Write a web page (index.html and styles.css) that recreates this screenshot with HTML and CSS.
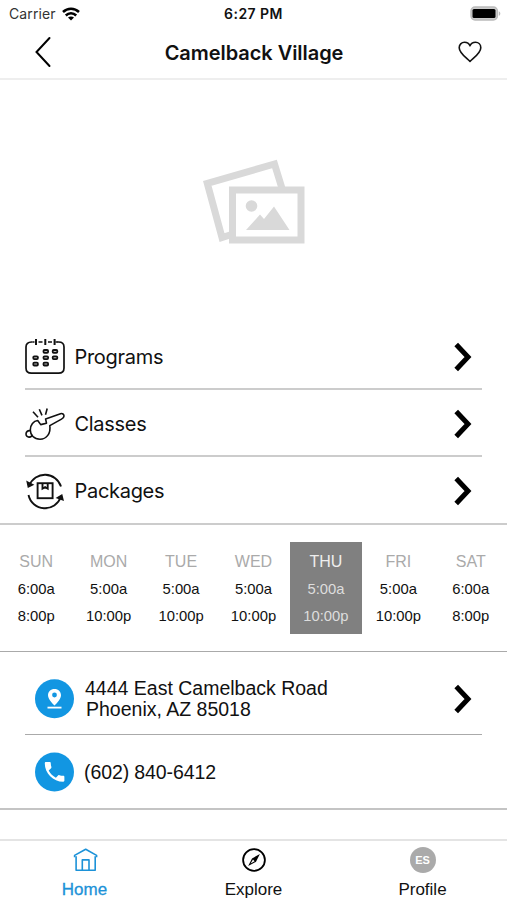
FILE: index.html
```
<!DOCTYPE html>
<html lang="en">
<head>
    <meta charset="UTF-8">
    <meta name="viewport" content="width=device-width, initial-scale=1.0">
    <title>Camelback Village</title>
    <link rel="stylesheet" href="styles.css">
</head>
<body>
    <div class="app">
        <!-- Status Bar -->
        <div class="status-bar">
            <div class="carrier">
                <span>Carrier</span>
                <svg class="wifi" width="18" height="14" viewBox="0 0 18 14" fill="none" stroke="#000" stroke-width="2.5">
                    <path d="M1 5C5.500.6 12.500.6 17 5"/>
                    <path d="M3.800 8.500C6.700 5.600 11.300 5.600 14.200 8.500"/>
                    <path d="M9 13.600L6 10.600C7.800 9 10.200 9 12 10.600Z" fill="#000" stroke="none"/>
                </svg>
            </div>
            <span class="time">6:27 PM</span>
            <svg class="battery" width="31" height="15" viewBox="0 0 31 15">
                <rect x="1" y="1" width="26.400" height="13" rx="4" fill="#ccc" stroke="#bbb" stroke-width="1.400"/>
                <rect x="2.500" y="3" width="23" height="9" rx="1.500" fill="#000"/>
                <path d="M28.800 5.200C30.800 6 30.800 9 28.800 9.800Z" fill="#bbb"/>
            </svg>
        </div>

        <!-- Header -->
        <header class="header">
            <svg class="back" width="18" height="32" viewBox="0 0 18 32" fill="none" stroke="#000" stroke-width="2" stroke-linecap="round">
                <path d="M15.500 2L2.500 16L15.500 30"/>
            </svg>
            <h1>Camelback Village</h1>
            <svg class="heart" width="24" height="22" viewBox="0 0 24 22" fill="none" stroke="#111" stroke-width="1.600" stroke-linejoin="round">
                <path d="M12 20.500C8 16.500 1.200 12 1.200 6.700C1.200 3.600 3.500 1.300 6.500 1.300C9 1.300 11.100 2.600 12 4.800C12.900 2.600 15 1.300 17.500 1.300C20.500 1.300 22.800 3.600 22.800 6.700C22.800 12 16 16.500 12 20.500Z"/>
            </svg>
        </header>

        <!-- Photo Placeholder -->
        <div class="hero">
            <svg width="102" height="86" viewBox="0 0 102 86" fill="none" stroke="#d9d9d9">
                <path d="M27 76L19 78.500L4.300 24.300L71.500 5L79.500 31" stroke-width="7"/>
                <rect x="29.500" y="31" width="68.500" height="50" fill="#fff" stroke-width="7"/>
                <circle cx="48.500" cy="47" r="5.800" fill="#d9d9d9" stroke="none"/>
                <path d="M43 71L57 55.500L61 60L71 47.500L86.500 71Z" fill="#d9d9d9" stroke="none"/>
            </svg>
        </div>

        <!-- Menu -->
        <nav class="menu">
            <div class="menu-item">
                <svg class="menu-icon" width="40" height="38" viewBox="0 0 40 38" fill="none" stroke="#111" stroke-width="1.700">
                    <path d="M7.500 4H6.500C3 4 1 6 1 9V30C1 33 3 35.200 6.500 35.200H33.500C37 35.200 39 33 39 30V9C39 6 37 4 33.500 4H32.500"/>
                    <path d="M13.500 4H17.500M23 4H27M7.500 4H9.500M30.500 4H33" stroke-width="1.600"/>
                    <path d="M11 1V7M20.300 1V7M29.600 1V7" stroke-width="2"/>
                    <g stroke-width="1.800" fill="#bbb">
                        <rect x="18.500" y="12" width="4.600" height="2.800" rx="1"/>
                        <rect x="27.700" y="12" width="4.600" height="2.800" rx="1"/>
                        <rect x="8.300" y="18.300" width="4.600" height="2.800" rx="1"/>
                        <rect x="18.500" y="18.300" width="4.600" height="2.800" rx="1"/>
                        <rect x="27.700" y="18.300" width="4.600" height="2.800" rx="1"/>
                        <rect x="8.300" y="24.700" width="4.600" height="2.800" rx="1"/>
                        <rect x="18.500" y="24.700" width="4.600" height="2.800" rx="1"/>
                    </g>
                </svg>
                <span class="menu-label">Programs</span>
                <svg class="chevron" width="18" height="30" viewBox="0 0 18 30" fill="none" stroke="#000" stroke-width="5">
                    <path d="M2.200 2.500L14 15L2.200 27.500"/>
                </svg>
            </div>
            <div class="menu-item">
                <svg class="menu-icon" width="40" height="38" viewBox="0 0 40 38" fill="none" stroke="#111" stroke-width="1.600" stroke-linejoin="round">
                    <path d="M12.700 15.500L15.700 19.600L21.500 18.200L20.600 14L35.500 8.700C37.500 8.100 39 9.300 39 11C39 12.600 38 13.300 36.500 14.100L24.800 20.600C26 28.500 21.500 34.200 15 34.200C9 34.200 5.300 30 5.300 25C5.300 20 8.500 16 12.700 15.500Z"/>
                    <path d="M5.500 25.800C3 25.100 1 26.600 1 29C1 31.300 2.700 32.300 4.300 32.100C6 31.900 7 31 7.200 29.800"/>
                    <path d="M8 6.800L13 12.300M14.300 4.200L17 10.400M22.200 3.500L20.500 9.800"/>
                </svg>
                <span class="menu-label">Classes</span>
                <svg class="chevron" width="18" height="30" viewBox="0 0 18 30" fill="none" stroke="#000" stroke-width="5">
                    <path d="M2.200 2.500L14 15L2.200 27.500"/>
                </svg>
            </div>
            <div class="menu-item">
                <svg class="menu-icon" width="40" height="38" viewBox="0 0 40 38" fill="none" stroke="#111" stroke-width="1.900">
                    <path d="M4.300 13.500A16.800 16.800 0 0 1 36 14.500"/>
                    <path d="M3.500 23A16.800 16.800 0 0 0 35.800 25"/>
                    <path d="M2.200 9.800L7.800 12.800L3.300 15Z" fill="#111" stroke-width="1.400"/>
                    <path d="M32.200 25.800L36.800 23L38 27.800Z" fill="#111" stroke-width="1.400"/>
                    <rect x="12.600" y="11.200" width="15" height="15"/>
                    <path d="M17.500 11.200V16.700L20.100 15.200L22.700 16.700V11.200"/>
                </svg>
                <span class="menu-label">Packages</span>
                <svg class="chevron" width="18" height="30" viewBox="0 0 18 30" fill="none" stroke="#000" stroke-width="5">
                    <path d="M2.200 2.500L14 15L2.200 27.500"/>
                </svg>
            </div>
        </nav>

        <!-- Opening Hours -->
        <div class="hours">
            <div class="day"><b>SUN</b><span>6:00a</span><span>8:00p</span></div>
            <div class="day"><b>MON</b><span>5:00a</span><span>10:00p</span></div>
            <div class="day"><b>TUE</b><span>5:00a</span><span>10:00p</span></div>
            <div class="day"><b>WED</b><span>5:00a</span><span>10:00p</span></div>
            <div class="day today"><b>THU</b><span>5:00a</span><span>10:00p</span></div>
            <div class="day"><b>FRI</b><span>5:00a</span><span>10:00p</span></div>
            <div class="day"><b>SAT</b><span>6:00a</span><span>8:00p</span></div>
        </div>

        <!-- Contact -->
        <div class="contact">
            <div class="contact-item address">
                <svg class="contact-icon" width="40" height="40" viewBox="0 0 40 40">
                    <circle cx="20.500" cy="19.800" r="19.500" fill="#1296e2"/>
                    <path d="M20.500 10C16.700 10 14 12.700 14 16.200C14 20.500 20.500 26.500 20.500 26.500C20.500 26.500 27 20.500 27 16.200C27 12.700 24.300 10 20.500 10ZM20.500 13.600A2.400 2.400 0 1 1 20.500 18.400A2.400 2.400 0 1 1 20.500 13.600Z" fill="#fff" fill-rule="evenodd"/>
                    <path d="M13.500 28.600H27.500" stroke="#fff" stroke-width="1.800"/>
                </svg>
                <div class="contact-text">
                    <div>4444 East Camelback Road</div>
                    <div class="city">Phoenix, AZ 85018</div>
                </div>
                <svg class="chevron" width="18" height="30" viewBox="0 0 18 30" fill="none" stroke="#000" stroke-width="5">
                    <path d="M2.200 2.500L14 15L2.200 27.500"/>
                </svg>
            </div>
            <div class="contact-item phone">
                <svg class="contact-icon" width="40" height="40" viewBox="0 0 40 40">
                    <circle cx="20.500" cy="20" r="19.500" fill="#1296e2"/>
                    <path transform="translate(7.500 6.800) scale(1.090)" d="M6.600 10.800C8.100 13.600 10.400 15.900 13.200 17.400L15.400 15.200C15.700 14.900 16.100 14.800 16.400 15C17.500 15.400 18.800 15.600 20 15.600C20.600 15.600 21 16 21 16.600V20C21 20.600 20.600 21 20 21C10.600 21 3 13.400 3 4C3 3.400 3.500 3 4 3H7.500C8.100 3 8.500 3.400 8.500 4C8.500 5.300 8.700 6.500 9.100 7.600C9.200 7.900 9.100 8.300 8.800 8.600Z" fill="#fff"/>
                </svg>
                <div class="contact-text">(602) 840-6412</div>
            </div>
        </div>

        <!-- Tab Bar -->
        <footer class="tab-bar">
            <div class="tab active">
                <svg width="26" height="26" viewBox="0 0 26 26" fill="none" stroke="#1c92d8" stroke-width="1.600" stroke-linejoin="round">
                    <path d="M4.100 9.300V23.200H23.200V9.300"/>
                    <path d="M2.600 10.300V8.400L13.700 2.200L24.600 8.400V10.300"/>
                    <path d="M10.300 23V12.900H17V23"/>
                </svg>
                <span>Home</span>
            </div>
            <div class="tab">
                <svg width="26" height="26" viewBox="0 0 26 26">
                    <circle cx="13" cy="13" r="10.900" fill="none" stroke="#000" stroke-width="1.800"/>
                    <path d="M18.900 7L15 14.800L7.200 19L11 11.400Z" fill="#000"/>
                    <path d="M9.600 16.600L12 12.600L13.600 14.200Z" fill="#fff"/>
                </svg>
                <span>Explore</span>
            </div>
            <div class="tab">
                <div class="avatar">ES</div>
                <span>Profile</span>
            </div>
        </footer>
    </div>
</body>
</html>
```
FILE: styles.css
```
/* Reset */
* {
    margin: 0;
    padding: 0;
    box-sizing: border-box;
}

body {
    font-family: "Liberation Sans", Arial, sans-serif;
    background-color: #fff;
    color: #111;
}

svg {
    display: block;
    flex-shrink: 0;
}

.app {
    display: flex;
    flex-direction: column;
    height: 900px;
    overflow: hidden;
}

/* Status Bar */
.status-bar {
    display: grid;
    grid-template-columns: 1fr auto 1fr;
    align-items: center;
    height: 27px;
    padding: 0 6px 0 9px;
    font-family: Inter, sans-serif;
    font-size: 14px;
    white-space: nowrap;
}

.carrier {
    display: flex;
    align-items: center;
    gap: 6px;
    color: #333;
    letter-spacing: 0.1px;
}

.time {
    margin-right: 3px;
    font-weight: 600;
    letter-spacing: 0.45px;
}

.battery {
    justify-self: end;
}

/* Header */
.header {
    display: grid;
    grid-template-columns: 60px 1fr 60px;
    align-items: center;
    height: 53px;
    border-bottom: 2px solid #eee;
}

.back {
    justify-self: end;
    margin: 0 8px 2px 0;
}

.heart {
    margin: 0 0 2px 11px;
}

.header h1 {
    padding-left: 1px;
    font-family: Inter, sans-serif;
    font-size: 20px;
    font-weight: 600;
    letter-spacing: -0.05px;
    text-align: center;
}

/* Photo Placeholder */
.hero {
    display: flex;
    justify-content: center;
    height: 242px;
    padding-top: 79px;
}

/* Menu */
.menu {
    height: 203px;
    padding: 0 25px;
    border-bottom: 2px solid #ccc;
}

.menu-item {
    display: flex;
    align-items: center;
    height: 67.5px;
    padding: 4px 10px 0 0;
    border-bottom: 2px solid #ccc;
}

.menu-item:last-child {
    padding-top: 0;
    border-bottom: none;
}

.menu-label {
    flex: 1;
    margin-left: 9.5px;
    font-family: Inter, sans-serif;
    font-size: 20px;
    letter-spacing: -0.3px;
}

/* Opening Hours */
.hours {
    display: grid;
    grid-template-columns: repeat(7, 1fr);
    height: 127px;
    padding: 17px 0;
    border-bottom: 1px solid #aaa;
}

.day {
    display: flex;
    flex-direction: column;
    align-items: center;
    height: 92px;
    padding-top: 6px;
    font-size: 14.8px;
    line-height: 27px;
}

.day b {
    font-size: 16px;
    font-weight: 400;
    line-height: 28px;
    color: #aaa;
}

.day.today {
    background-color: #808080;
    color: #ddd;
}

.day.today b {
    color: #eee;
}

/* Contact */
.contact {
    height: 158px;
    border-bottom: 2px solid #c4c4c4;
}

.contact-item {
    display: flex;
    align-items: center;
    margin: 0 25px;
    padding: 0 10px 0 9px;
    font-size: 19.5px;
    line-height: 21px;
}

.address {
    height: 83px;
    padding-top: 11px;
    border-bottom: 1px solid #aaa;
}

.phone {
    height: 74px;
}

.contact-text {
    flex: 1;
    margin-left: 11px;
}

.phone .contact-text {
    margin-left: 10px;
    letter-spacing: -0.1px;
}

.city {
    padding-left: 1px;
}

/* Tab Bar */
.tab-bar {
    display: grid;
    grid-template-columns: repeat(3, 1fr);
    flex: 1;
    margin-top: 29px;
    border-top: 2px solid #e4e4e4;
}

.tab {
    display: flex;
    flex-direction: column;
    align-items: center;
    padding-top: 6px;
    font-size: 17px;
}

.tab span {
    margin-top: 7px;
    line-height: 20px;
}

.tab.active {
    color: #1c92d8;
}

.tab.active span {
    -webkit-text-stroke: 0.3px #1c92d8;
}

.avatar {
    width: 26px;
    height: 26px;
    border-radius: 50%;
    background-color: #aaa;
    color: #fff;
    font-size: 11px;
    font-weight: bold;
    line-height: 27px;
    text-align: center;
}
```
